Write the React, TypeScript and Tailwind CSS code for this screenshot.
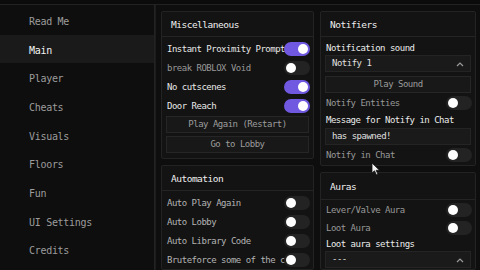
import React from "react";

const mono = { fontFamily: '"DejaVu Sans Mono", "Liberation Mono", monospace' };

function Toggle({ on }: { on?: boolean }) {
  return on ? (
    <div className="w-[26px] h-[14px] rounded-full bg-[#7059e0] flex items-center justify-end pr-[2px] shrink-0">
      <div className="w-[10px] h-[10px] rounded-full bg-white" />
    </div>
  ) : (
    <div className="w-[26px] h-[14px] rounded-full bg-[#232323] flex items-center justify-start pl-[2px] shrink-0">
      <div className="w-[10px] h-[10px] rounded-full bg-white" />
    </div>
  );
}

function Row({ label, on, tone = "on", h = "h-[19px]" }: { label: string; on?: boolean; tone?: "on" | "dim" | "mid"; h?: string }) {
  const color = tone === "dim" ? "text-[#989898]" : tone === "mid" ? "text-[#b4b4b4]" : "text-[#e8e8e8]";
  return (
    <div className={`flex items-center pl-[5px] pr-[3px] ${h}`}>
      <span className={`flex-1 min-w-0 pt-[2px] text-[9px] tracking-[-0.5px] whitespace-nowrap overflow-visible ${color}`}>
        {label}
      </span>
      <div className="relative z-10">
        <Toggle on={on} />
      </div>
    </div>
  );
}

function Header({ title, h = "h-[25px]" }: { title: string; h?: string }) {
  return (
    <div className={`${h} border-b border-[#242424] flex items-center pl-[9px] pt-[2px] text-[9.5px] tracking-[-0.5px] text-[#f0f0f0]`}>
      {title}
    </div>
  );
}

function Button({ label }: { label: string }) {
  return (
    <div className="mx-[4px] h-[17px] bg-[#181818] border border-[#262626] flex items-center justify-center text-[9px] tracking-[-0.5px] text-[#9c9c9c]">
      {label}
    </div>
  );
}

function Dropdown({ value }: { value: string }) {
  return (
    <div className="mx-[4px] h-[17px] bg-[#1a1a1a] border border-[#242424] flex items-center justify-between pl-[6px] pr-[6px] text-[9px] tracking-[-0.5px] text-[#e0e0e0]">
      <span>{value}</span>
      <svg width="8" height="6" viewBox="0 0 8 6">
        <path d="M1 5 L4 2 L7 5" stroke="#9a9a9a" strokeWidth="1.2" fill="none" />
      </svg>
    </div>
  );
}

function Label({ text }: { text: string }) {
  return (
    <div className="h-[14px] flex items-center pl-[5px] pt-[2px] text-[9px] tracking-[-0.5px] text-[#ececec] whitespace-nowrap">
      {text}
    </div>
  );
}

const sidebar = ["Read Me", "Main", "Player", "Cheats", "Visuals", "Floors", "Fun", "UI Settings", "Credits"];

export default function App() {
  return (
    <div style={mono} className="w-[480px] h-[270px] bg-[#0e0e0e] overflow-hidden relative">
      <div className="h-[5px] border-b border-[#222] bg-[#0b0b0b]" />
      <div className="flex h-[265px]">
        <div className="w-[155px] border-r border-[#232323] pt-[1px] shrink-0">
          {sidebar.map((s) => (
            <div
              key={s}
              className={`h-[28.7px] flex items-center pl-[29px] pt-[2px] text-[10px] tracking-[-0.3px] ${
                s === "Main" ? "bg-[#1a1a1a] text-[#f2f2f2]" : "text-[#9c9c9c]"
              }`}
            >
              {s}
            </div>
          ))}
        </div>
        <div className="flex gap-[6px] pl-[5px] pt-[6px] border-l border-[#1c1c1c]">
          <div className="w-[153px] flex flex-col gap-[6px]">
            <div className="bg-[#131313] border border-[#232323] rounded-[2px] pb-[5px]">
              <Header title="Miscellaneous" />
              <div className="pt-[2px]">
                <Row label="Instant Proximity Prompt" on />
                <Row label="break ROBLOX Void" tone="dim" />
                <Row label="No cutscenes" on />
                <Row label="Door Reach" on />
              </div>
              <div className="mt-[1px] flex flex-col gap-[3px]">
                <Button label="Play Again (Restart)" />
                <Button label="Go to Lobby" />
              </div>
            </div>
            <div className="bg-[#131313] border border-[#232323] rounded-[2px] flex-1 overflow-hidden">
              <Header title="Automation" />
              <div className="pt-[2px]">
                <Row label="Auto Play Again" tone="mid" />
                <Row label="Auto Lobby" tone="mid" />
                <Row label="Auto Library Code" tone="mid" />
                <Row label="Bruteforce some of the code" tone="mid" />
              </div>
            </div>
          </div>
          <div className="w-[156px] flex flex-col gap-[6px]">
            <div className="bg-[#131313] border border-[#232323] rounded-[2px]">
              <Header title="Notifiers" />
              <div className="pt-[4px]">
                <Label text="Notification sound" />
                <Dropdown value="Notify 1" />
                <div className="mt-[4px]">
                  <Button label="Play Sound" />
                </div>
                <Row label="Notify Entities" tone="dim" h="h-[20px]" />
                <Label text="Message for Notify in Chat" />
                <div className="mt-[1px] mx-[4px] h-[17px] bg-[#1a1a1a] border border-[#242424] flex items-center pl-[6px] text-[9px] tracking-[-0.5px] text-[#e0e0e0]">
                  has spawned!
                </div>
                <Row label="Notify in Chat" tone="dim" h="h-[20px]" />
              </div>
            </div>
            <div className="bg-[#131313] border border-[#232323] rounded-[2px] flex-1">
              <Header title="Auras" h="h-[27px]" />
              <div className="pt-[1px]">
                <Row label="Lever/Valve Aura" tone="dim" h="h-[18px]" />
                <Row label="Loot Aura" tone="dim" h="h-[18px]" />
                <Label text="Loot aura settings" />
                <Dropdown value="---" />
              </div>
            </div>
          </div>
        </div>
      </div>
      <svg className="absolute left-[371px] top-[162px]" width="10" height="14" viewBox="0 0 10 14">
        <path d="M1 1 L1 11 L3.5 8.8 L5.5 13 L7 12.3 L5.1 8.3 L8.5 8.3 Z" fill="#f4f4f4" stroke="#111" strokeWidth="0.8" />
      </svg>
    </div>
  );
}
